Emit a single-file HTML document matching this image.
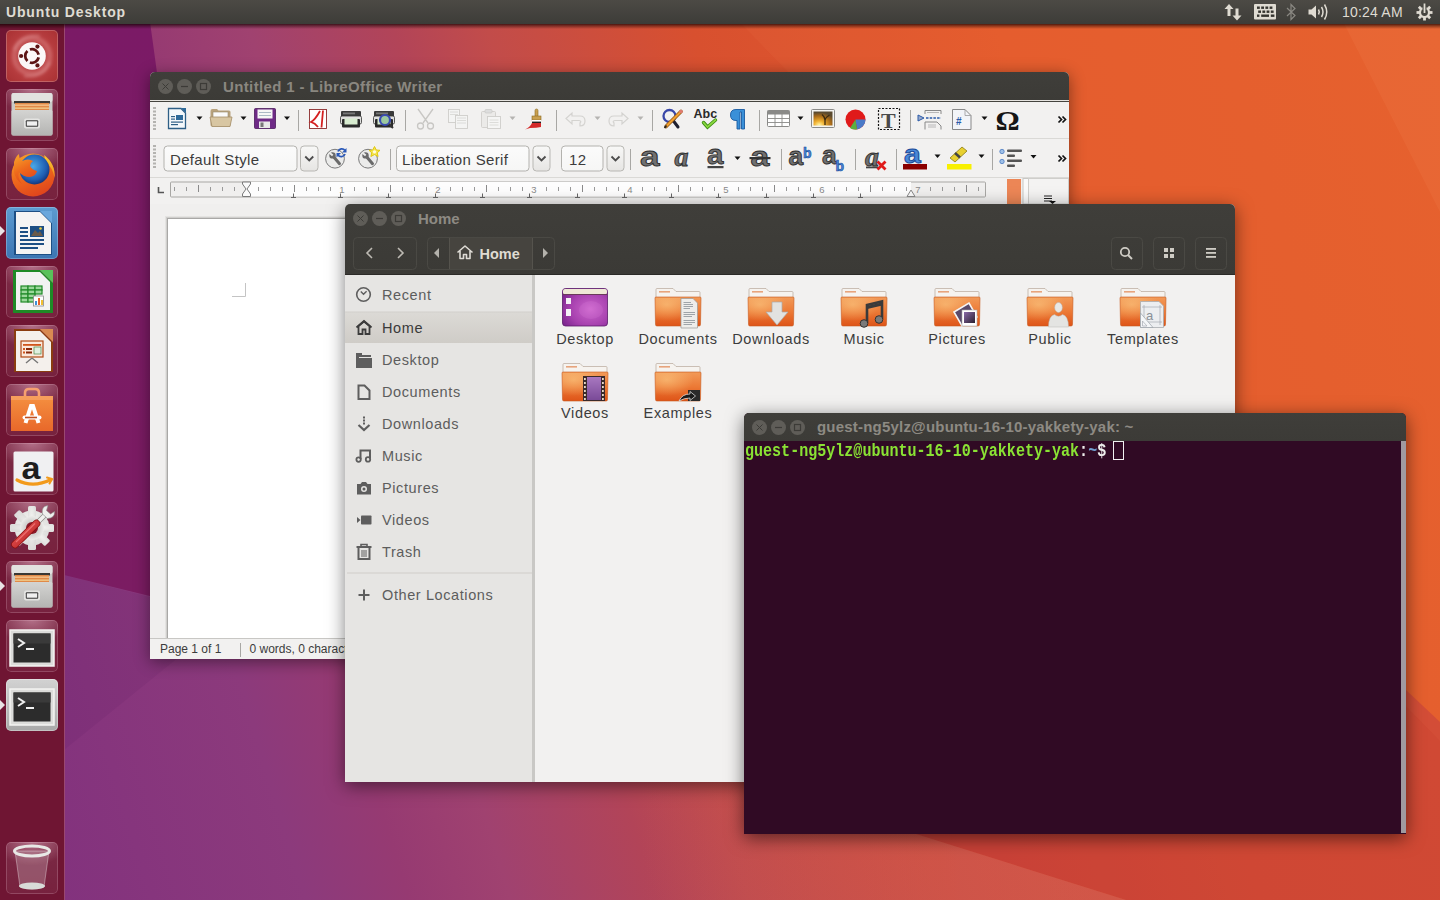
<!DOCTYPE html>
<html><head><meta charset="utf-8">
<style>
*{box-sizing:border-box;margin:0;padding:0}
html,body{width:1440px;height:900px;overflow:hidden;background:#7a1b62;font-family:"Liberation Sans",sans-serif;position:relative}
.abs{position:absolute;white-space:nowrap}
#wall{position:absolute;left:0;top:0;width:1440px;height:900px}
#panel{position:absolute;left:0;top:0;width:1440px;height:24px;background:linear-gradient(#4c4a45,#3d3c38);color:#dfdbd2;z-index:50}
#launcher{position:absolute;left:0;top:24px;width:65px;height:876px;background:#6f1533;border-right:1px solid rgba(255,190,255,.3);z-index:40}
.tile{position:absolute;left:6px;width:52px;height:52px;border-radius:5px;background:radial-gradient(ellipse 70% 45% at 50% 0%,rgba(255,210,230,.42),rgba(255,210,230,0)),linear-gradient(rgba(255,255,255,.09),rgba(255,255,255,.06));box-shadow:inset 0 0 0 1px rgba(255,220,235,.2)}
.tile svg{position:absolute;left:0;top:0}
.layer{position:absolute;left:0;top:0;width:1440px;height:900px}
.frame{position:absolute;border-radius:5px 5px 0 0;box-shadow:0 3px 16px rgba(0,0,0,.45)}
.wbtn{position:absolute;width:15px;height:15px;border-radius:50%;background:#5f5d58}
.ttl{position:absolute;font-weight:bold;font-size:15px;color:#8a8780;white-space:nowrap}
</style></head><body>

<svg id="wall" width="1440" height="900" viewBox="0 0 1440 900">
<defs>
<linearGradient id="g1" gradientUnits="userSpaceOnUse" x1="0" y1="900" x2="1562" y2="430">
<stop offset="0" stop-color="#80307e"/>
<stop offset="0.18" stop-color="#8c3a7c"/>
<stop offset="0.24" stop-color="#963a72"/>
<stop offset="0.30" stop-color="#a04270"/>
<stop offset="0.385" stop-color="#b24458"/>
<stop offset="0.44" stop-color="#c24c4a"/>
<stop offset="0.56" stop-color="#d8502f"/>
<stop offset="0.74" stop-color="#e35a2b"/>
<stop offset="1" stop-color="#e55e2b"/>
</linearGradient>
<linearGradient id="g2" gradientUnits="userSpaceOnUse" x1="760" y1="560" x2="1040" y2="900">
<stop offset="0" stop-color="#a01468" stop-opacity="0"/>
<stop offset="1" stop-color="#a01468" stop-opacity="0.2"/>
</linearGradient>
<linearGradient id="g3" gradientUnits="userSpaceOnUse" x1="0" y1="24" x2="0" y2="600">
<stop offset="0" stop-color="#7b1a66"/>
<stop offset="1" stop-color="#7b1c62"/>
</linearGradient>
<linearGradient id="g4" gradientUnits="userSpaceOnUse" x1="640" y1="0" x2="960" y2="0"><stop offset="0" stop-color="#c05a70" stop-opacity="0"/><stop offset="1" stop-color="#c05a70" stop-opacity="0.4"/></linearGradient>
</defs>
<rect width="1440" height="900" fill="url(#g1)"/>
<polygon points="1440,722 1406,690 1150,450 744,780 916,834 1126,900 1440,900" fill="#961450" fill-opacity="0.26"/>
<polygon points="718,0 1440,0 1440,741" fill="#ff9060" fill-opacity="0.07"/>
<polygon points="1332,0 1440,0 1440,212" fill="#ffa070" fill-opacity="0.1"/>
<polygon points="744,780 916,834 1126,900 640,900 640,780" fill="url(#g4)"/>
<polygon points="0,560 64,575 200,610 200,640 64,750 0,770" fill="#3a0040" fill-opacity="0.07"/>
<polygon points="0,0 147,0 158,80 215,612 64,575 0,560" fill="url(#g3)"/>
</svg>

<div id="panel">
<div class="abs" style="left:6px;top:4px;font-size:14px;font-weight:bold;letter-spacing:0.85px">Ubuntu Desktop</div>
<svg class="abs" style="left:1220px;top:0" width="220" height="24" viewBox="1220 0 220 24">
<g fill="#dfdbd2">
<path d="M1229 4 L1224.5 9 H1227.5 V16 H1230.5 V9 H1233.5 Z"/>
<path d="M1237 20.5 L1241.5 15.5 H1238.5 V8.5 H1235.5 V15.5 H1232.5 Z"/>
<rect x="1254" y="4" width="22" height="15.5" rx="1"/>
</g>
<g fill="#35342f"><rect x="1257" y="6.5" width="2.8" height="2.4"/><rect x="1261.2" y="6.5" width="2.8" height="2.4"/><rect x="1265.4" y="6.5" width="2.8" height="2.4"/><rect x="1269.6" y="6.5" width="2.8" height="2.4"/><rect x="1258.2" y="10.5" width="2.8" height="2.4"/><rect x="1262.4" y="10.5" width="2.8" height="2.4"/><rect x="1266.6" y="10.5" width="2.8" height="2.4"/><rect x="1270.8" y="10.5" width="2.8" height="2.4"/><rect x="1257" y="14.5" width="2.4" height="2.4"/><rect x="1261.2" y="14.5" width="7.8" height="2.4"/><rect x="1270.8" y="14.5" width="3.6" height="2.4"/></g>
<path d="M1287 8 L1295 15.5 L1291 19.5 V4.5 L1295 8.5 L1287 16" fill="none" stroke="#8a8882" stroke-width="1.2"/>
<path d="M1308.5 9.5 H1311.5 L1316 5.5 V18.5 L1311.5 14.5 H1308.5 Z" fill="#dfdbd2"/>
<path d="M1318.5 9.5 Q1320 12 1318.5 14.5 M1321.5 7 Q1324.5 12 1321.5 17 M1324.5 4.5 Q1329 12 1324.5 19.5" fill="none" stroke="#dfdbd2" stroke-width="1.5"/>
<g transform="translate(1424.5 12.5)"><g fill="#dfdbd2"><rect x="-1.4" y="-8" width="2.8" height="16"/><rect x="-1.4" y="-8" width="2.8" height="16" transform="rotate(45)"/><rect x="-1.4" y="-8" width="2.8" height="16" transform="rotate(90)"/><rect x="-1.4" y="-8" width="2.8" height="16" transform="rotate(135)"/></g><circle r="5.6" fill="#dfdbd2"/><circle r="3.4" fill="#45443f"/><rect x="-2" y="-9" width="4" height="6" fill="#45443f"/><rect x="-0.9" y="-9" width="1.8" height="9.5" fill="#dfdbd2"/></g>
</svg>
<div class="abs" style="left:1342px;top:4px;font-size:14px;letter-spacing:0.2px">10:24 AM</div>
</div>

<div id="pshadow" style="position:absolute;left:0;top:24px;width:1440px;height:5px;background:linear-gradient(rgba(20,0,0,.72),rgba(20,0,0,.4) 40%,rgba(20,0,0,0));z-index:49"></div>

<div id="launcher">
<div class="tile" style="top:6px;background:radial-gradient(circle at 50% 50%,#c66060 0,#b83e40 55%,#a83032 100%);box-shadow:inset 0 0 0 1px rgba(255,255,255,.22)"><svg width="52" height="52" viewBox="0 0 52 52"><defs><filter id="bl1"><feGaussianBlur stdDeviation="1.5"/></filter></defs><g filter="url(#bl1)"><circle cx="26" cy="26" r="18" fill="none" stroke="rgba(255,200,200,.22)" stroke-width="5"/><path d="M8 20 Q14 4 34 6" fill="none" stroke="rgba(255,220,220,.2)" stroke-width="3"/><path d="M44 32 Q38 48 18 46" fill="none" stroke="rgba(255,220,220,.2)" stroke-width="3"/></g><circle cx="26" cy="26" r="13.8" fill="#fbf7f7"/><path d="M32.65 27.41 A6.8 6.8 0 0 1 23.90 32.47" fill="none" stroke="#5c1414" stroke-width="2.8"/><path d="M21.45 31.05 A6.8 6.8 0 0 1 21.45 20.95" fill="none" stroke="#5c1414" stroke-width="2.8"/><path d="M23.90 19.53 A6.8 6.8 0 0 1 32.65 24.59" fill="none" stroke="#5c1414" stroke-width="2.8"/><circle cx="15.10" cy="26.00" r="2.1" fill="#5c1414"/><circle cx="31.45" cy="16.56" r="2.1" fill="#5c1414"/><circle cx="31.45" cy="35.44" r="2.1" fill="#5c1414"/></svg></div>
<div class="tile" style="top:65px">
<svg width="52" height="52" viewBox="0 0 52 52"><defs><linearGradient id="cab" x1="0" y1="0" x2="0" y2="1"><stop offset="0" stop-color="#d4d4d2"/><stop offset="1" stop-color="#b4b4b2"/></linearGradient></defs><rect x="5.5" y="4" width="41" height="42.5" rx="2" fill="#c9c9c6"/><rect x="5.5" y="4" width="41" height="9" rx="2" fill="#e2e2e0"/><rect x="8" y="12" width="36" height="2.5" fill="#3a3834"/><rect x="9" y="14" width="34" height="7" fill="#e08a48"/><rect x="9" y="15.5" width="34" height="1.3" fill="#f7c890"/><rect x="9" y="18.5" width="34" height="1.3" fill="#f2d090"/><rect x="5.5" y="21" width="41" height="25.5" rx="1.5" fill="url(#cab)"/><rect x="18" y="29.5" width="16" height="10" rx="2" fill="#e4e4e2"/><rect x="19.8" y="31.3" width="12.4" height="6.4" rx="1" fill="#3a3a3a"/><rect x="20.8" y="32.3" width="10.4" height="4.4" fill="#f0f0f0"/></svg></div>
<div class="tile" style="top:124px"><svg width="52" height="52" viewBox="0 0 52 52"><defs><radialGradient id="ffg" cx="0.45" cy="0.4" r="0.65"><stop offset="0" stop-color="#4aa8e8"/><stop offset=".7" stop-color="#1e5cb0"/><stop offset="1" stop-color="#142a6a"/></radialGradient><linearGradient id="ffo" x1="0.2" y1="0" x2="0.6" y2="1"><stop offset="0" stop-color="#f7a02a"/><stop offset="0.5" stop-color="#ee6a1c"/><stop offset="1" stop-color="#e0441c"/></linearGradient><linearGradient id="ffy" x1="0" y1="0" x2="0" y2="1"><stop offset="0" stop-color="#f8d030"/><stop offset="1" stop-color="#f08a20"/></linearGradient></defs><circle cx="27" cy="27" r="21.5" fill="url(#ffo)"/><path d="M38 7 Q50 16 48.5 30 Q47 20 40 14 Z" fill="url(#ffy)"/><circle cx="28.5" cy="21.5" r="15" fill="url(#ffg)"/><path d="M8 14 Q10 8 13 6 Q13 11 16 13 Q22 10 27 13 Q24 15 24 18 Q26 22 31 23 Q30 28 24 29 Q17 29 13 24 Q11 30 16 36 Q9 31 8 24 Z" fill="url(#ffo)"/></svg></div>
<div class="tile" style="top:183px;background:linear-gradient(#5d9bd0,#3c76b3);box-shadow:inset 0 0 0 1px rgba(255,255,255,.25)">
<svg width="52" height="52" viewBox="0 0 52 52"><path d="M8 4 H34 L46 16 V48 H8 Z" fill="#1d4f84"/><path d="M10 5 H34 L45 16 V47 H10 Z" fill="#f4f4f4"/><path d="M34 4 L46 16 V4 Z" fill="#6aa7dc"/><rect x="14" y="20" width="8" height="2" fill="#1d4f84"/><rect x="14" y="24" width="8" height="2" fill="#1d4f84"/><rect x="14" y="28" width="8" height="2" fill="#1d4f84"/><rect x="14" y="32" width="24" height="2" fill="#1d4f84"/><rect x="14" y="36" width="24" height="2" fill="#1d4f84"/><rect x="14" y="40" width="18" height="2" fill="#1d4f84"/><rect x="24" y="19" width="14" height="11" fill="#1d4f84"/><path d="M25 29 L29 23 L32 26 L34 24 L37 29 Z" fill="#6a5a4a"/><circle cx="34.5" cy="21.5" r="1.3" fill="#f0d040"/></svg></div>
<div class="tile" style="top:242px">
<svg width="52" height="52" viewBox="0 0 52 52"><path d="M7 4 H34 L47 17 V47 H7 Z" fill="#1e8a26"/><path d="M10 6 H34 L44 16 V44 H10 Z" fill="#f2f2f2"/><path d="M34 4 L47 17 V4 Z" fill="#59c25a"/><g fill="#9bd79b" stroke="#208a28" stroke-width="1.2"><rect x="15" y="20" width="7" height="4"/><rect x="22" y="20" width="7" height="4"/><rect x="29" y="20" width="7" height="4"/><rect x="15" y="24" width="7" height="4"/><rect x="22" y="24" width="7" height="4"/><rect x="29" y="24" width="7" height="4"/><rect x="15" y="28" width="7" height="4"/><rect x="22" y="28" width="7" height="4"/><rect x="15" y="32" width="7" height="4"/><rect x="22" y="32" width="7" height="4"/></g><rect x="27.5" y="30" width="10" height="10" fill="#fff" stroke="#888" stroke-width=".8"/><rect x="29" y="35" width="2" height="4" fill="#3f8fd6"/><rect x="32" y="32" width="2" height="7" fill="#e8622a"/><rect x="35" y="34" width="2" height="5" fill="#f2c031"/></svg></div>
<div class="tile" style="top:301px">
<svg width="52" height="52" viewBox="0 0 52 52"><path d="M8 4 H34 L47 17 V47 H8 Z" fill="#8a3c10"/><path d="M10 6 H34 L45 17 V46 H10 Z" fill="#f4f0ec"/><path d="M34 4 L47 17 V4 Z" fill="#d98a52"/><rect x="15" y="16" width="22" height="16" fill="#fbe9dc" stroke="#b04a14" stroke-width="1.2"/><rect x="17" y="19" width="18" height="1.8" fill="#d0561c"/><rect x="17" y="23" width="2" height="2" fill="#d0561c"/><rect x="20" y="23" width="6" height="2" fill="#8a2a0a"/><rect x="17" y="26.5" width="2" height="2" fill="#d0561c"/><rect x="20" y="26.5" width="6" height="2" fill="#8a2a0a"/><rect x="28" y="22" width="7" height="7" fill="#e0f0e0" stroke="#4a8a4a" stroke-width=".7"/><path d="M26 33 L20 38 M26 33 L32 38" stroke="#777" stroke-width="1.4"/></svg></div>
<div class="tile" style="top:360px"><svg width="52" height="52" viewBox="0 0 52 52"><defs><linearGradient id="sc" x1="0" y1="0" x2="0" y2="1"><stop offset="0" stop-color="#f59040"/><stop offset="1" stop-color="#e8682a"/></linearGradient></defs><path d="M19 14 V9 Q19 5 23 5 H29 Q33 5 33 9 V14" stroke="#f6a070" stroke-width="2.6" fill="none"/><rect x="5" y="12" width="42" height="35" fill="url(#sc)"/><path d="M5 12 H47 V16 H5 Z" fill="#f7a870" fill-opacity=".6"/><path d="M19.5 39 L25 22 H27 L32.5 39" stroke="#fff" stroke-width="4" fill="none"/><rect x="16.5" y="31.5" width="19" height="4" rx="2" fill="#fff"/><rect x="19" y="32.7" width="12" height="1.6" fill="#c05020"/></svg></div>
<div class="tile" style="top:419px"><svg width="52" height="52" viewBox="0 0 52 52"><rect x="7.5" y="8.5" width="40" height="40" rx="1.5" fill="#f0f0f2"/><text transform="translate(15.5 36) scale(1.1 1)" font-family="Liberation Sans" font-weight="bold" font-size="31" fill="#1e1e1e">a</text><path d="M11 37 Q27 45.5 45 36.5" stroke="#f29a1c" stroke-width="3.2" fill="none" stroke-linecap="round"/><path d="M41 34.5 L46 36 L43.5 40.5" stroke="#f29a1c" stroke-width="2" fill="none" stroke-linecap="round"/></svg></div>
<div class="tile" style="top:478px"><svg width="52" height="52" viewBox="0 0 52 52"><defs><radialGradient id="gearg" cx=".45" cy=".4" r=".6"><stop offset="0" stop-color="#f8f8f6"/><stop offset="1" stop-color="#dcdcda"/></radialGradient><radialGradient id="gearin" cx=".5" cy=".5" r=".5"><stop offset=".4" stop-color="#c8c8c6"/><stop offset="1" stop-color="#ececea"/></radialGradient><linearGradient id="wrr" x1="0" y1="0" x2="1" y2="1"><stop offset="0" stop-color="#f06060"/><stop offset="1" stop-color="#b01818"/></linearGradient></defs><g transform="translate(26 26)"><g fill="url(#gearg)"><circle r="17.5"/><rect x="-4" y="-22" width="8" height="44" rx="1.5"/><rect x="-4" y="-22" width="8" height="44" rx="1.5" transform="rotate(45)"/><rect x="-4" y="-22" width="8" height="44" rx="1.5" transform="rotate(90)"/><rect x="-4" y="-22" width="8" height="44" rx="1.5" transform="rotate(135)"/></g><circle r="12" fill="url(#gearin)"/><circle r="6" fill="#8a1a2a"/></g><path d="M29 23 L40 12" stroke="#8a8a88" stroke-width="5" stroke-linecap="round"/><path d="M29 23 L40 12" stroke="#f0f0ee" stroke-width="3.6" stroke-linecap="round"/><path d="M36.5 12 Q35 4 42 3.5 L40.5 8.5 L44.5 12 L48.5 9.5 Q49 16 41.5 16.5 Z" fill="#efefed" stroke="#8a8a88" stroke-width=".6"/><path d="M9 42.5 L30.5 21.5" stroke="#8a1010" stroke-width="7.5" stroke-linecap="round"/><path d="M9 42.5 L30.5 21.5" stroke="url(#wrr)" stroke-width="6" stroke-linecap="round"/><path d="M10 40 L29 21.5" stroke="#ff9090" stroke-width="1.2" stroke-opacity=".6"/></svg></div>
<div class="tile" style="top:537px">
<svg width="52" height="52" viewBox="0 0 52 52"><defs><linearGradient id="cab2" x1="0" y1="0" x2="0" y2="1"><stop offset="0" stop-color="#d4d4d2"/><stop offset="1" stop-color="#b4b4b2"/></linearGradient></defs><rect x="5.5" y="4" width="41" height="42.5" rx="2" fill="#c9c9c6"/><rect x="5.5" y="4" width="41" height="9" rx="2" fill="#e2e2e0"/><rect x="8" y="12" width="36" height="2.5" fill="#3a3834"/><rect x="9" y="14" width="34" height="7" fill="#e08a48"/><rect x="9" y="15.5" width="34" height="1.3" fill="#f7c890"/><rect x="9" y="18.5" width="34" height="1.3" fill="#f2d090"/><rect x="5.5" y="21" width="41" height="25.5" rx="1.5" fill="url(#cab2)"/><rect x="18" y="29.5" width="16" height="10" rx="2" fill="#e4e4e2"/><rect x="19.8" y="31.3" width="12.4" height="6.4" rx="1" fill="#3a3a3a"/><rect x="20.8" y="32.3" width="10.4" height="4.4" fill="#f0f0f0"/></svg></div>
<div class="tile" style="top:596px">
<svg width="52" height="52" viewBox="0 0 52 52"><rect x="4" y="10" width="44" height="36" rx="1" fill="#dcdcda"/><rect x="4" y="10" width="44" height="36" fill="none" stroke="#f4f4f2" stroke-width="1.5"/><rect x="7.5" y="13.5" width="37" height="29" fill="#2c2c2c"/><rect x="7.5" y="13.5" width="37" height="10" fill="#3a3a3a"/><path d="M12 19 L18 23 L12 27" stroke="#f0f0f0" stroke-width="2" fill="none"/><rect x="20" y="28" width="8" height="2" fill="#f0f0f0"/></svg></div>
<div class="tile" style="top:655px;background:linear-gradient(#d2d2d2,#a8a8a8);box-shadow:inset 0 0 0 1px rgba(255,255,255,.3)">
<svg width="52" height="52" viewBox="0 0 52 52"><rect x="4" y="10" width="44" height="36" rx="1" fill="#dcdcda"/><rect x="4" y="10" width="44" height="36" fill="none" stroke="#f4f4f2" stroke-width="1.5"/><rect x="7.5" y="13.5" width="37" height="29" fill="#2c2c2c"/><rect x="7.5" y="13.5" width="37" height="10" fill="#3a3a3a"/><path d="M12 19 L18 23 L12 27" stroke="#f0f0f0" stroke-width="2" fill="none"/><rect x="20" y="28" width="8" height="2" fill="#f0f0f0"/></svg></div>
<div class="tile" style="top:818px">
<svg width="52" height="52" viewBox="0 0 52 52"><path d="M9 9 L14 45 Q26 49 38 45 L43 9 Z" fill="rgba(200,170,180,.35)" stroke="rgba(255,255,255,.35)" stroke-width="1"/><ellipse cx="26" cy="9" rx="17.5" ry="5" fill="none" stroke="#e8e8e6" stroke-width="3"/><ellipse cx="26" cy="44" rx="13" ry="3.5" fill="#d8dcd8"/></svg></div>
<svg class="abs" style="left:0;top:201px" width="6" height="12"><path d="M0 1 L5 6 L0 11 Z" fill="#e8e2e4"/></svg>
<svg class="abs" style="left:0;top:556px" width="6" height="12"><path d="M0 1 L5 6 L0 11 Z" fill="#e8e2e4"/></svg>
<svg class="abs" style="left:0;top:675px" width="6" height="12"><path d="M0 1 L5 6 L0 11 Z" fill="#e8e2e4"/></svg>
</div>
<div class="layer" id="lo">
<div class="frame" style="left:150px;top:72px;width:919px;height:587px;background:#f2f1f0"></div>
<div class="abs" style="left:150px;top:72px;width:919px;height:28px;background:linear-gradient(#3f3e3a,#3c3b37);border-radius:5px 5px 0 0"></div>
<div class="abs" style="left:150px;top:100px;width:919px;height:1px;background:#e6e4e0"></div>
<div class="abs" style="left:150px;top:101px;width:919px;height:1px;background:#45443f"></div>
<div class="wbtn" style="left:158.0px;top:79px"></div>
<div class="wbtn" style="left:177.0px;top:79px"></div>
<div class="wbtn" style="left:196.0px;top:79px"></div>
<svg class="abs" style="left:150px;top:72px" width="70" height="28" viewBox="150 72 70 28"><path d="M162.5 83.5 L168.5 89.5 M168.5 83.5 L162.5 89.5" stroke="#3c3b37" stroke-width="1"/><path d="M181 86.5 H188" stroke="#3c3b37" stroke-width="1.2"/><rect x="200.5" y="83.5" width="6" height="6" fill="none" stroke="#3c3b37" stroke-width="1.2"/></svg>
<div class="ttl" style="left:223px;top:78px;letter-spacing:0.37px">Untitled 1 - LibreOffice Writer</div>
<div class="abs" style="left:150px;top:102px;width:919px;height:36px;background:#f2f1f0"></div>
<div class="abs" style="left:150px;top:138px;width:919px;height:1px;background:#dad9d6"></div>
<div class="abs" style="left:150px;top:139px;width:919px;height:38px;background:#f2f1f0"></div>
<div class="abs" style="left:150px;top:177px;width:919px;height:1px;background:#dad9d6"></div>
<svg class="abs" style="left:150px;top:102px" width="919" height="557" viewBox="150 102 919 557"><defs><linearGradient id="boxg" x1="0" y1="0" x2="0" y2="1"><stop offset="0" stop-color="#fbfbfb"/><stop offset="1" stop-color="#f6f6f5"/></linearGradient><linearGradient id="btng" x1="0" y1="0" x2="0" y2="1"><stop offset="0" stop-color="#f8f8f7"/><stop offset="1" stop-color="#e6e5e3"/></linearGradient><radialGradient id="imgg" cx=".3" cy=".95" r=".9"><stop offset="0" stop-color="#fff2a0"/><stop offset=".3" stop-color="#f0b030"/><stop offset=".7" stop-color="#a86a18"/><stop offset="1" stop-color="#5a4a30"/></radialGradient><radialGradient id="wrg" cx=".4" cy=".35" r=".7"><stop offset="0" stop-color="#fafafa"/><stop offset="1" stop-color="#b8b8b6"/></radialGradient></defs><rect x="153.0" y="107" width="3" height="2" fill="#b4b3b0"/><rect x="153.0" y="110.5" width="3" height="2" fill="#b4b3b0"/><rect x="153.0" y="114.0" width="3" height="2" fill="#b4b3b0"/><rect x="153.0" y="117.5" width="3" height="2" fill="#b4b3b0"/><rect x="153.0" y="121.0" width="3" height="2" fill="#b4b3b0"/><rect x="153.0" y="124.5" width="3" height="2" fill="#b4b3b0"/><rect x="153.0" y="128.0" width="3" height="2" fill="#b4b3b0"/><path d="M168.5 108.5 H181 L185.5 113 V128.5 H168.5 Z" fill="#f4f8fb" stroke="#2e5f86" stroke-width="1.3"/><path d="M181 108 H186 V113 Z" fill="#2e6a9a"/><rect x="171" y="116" width="4" height="1.2" fill="#2e5f86"/><rect x="171" y="118.5" width="4" height="1.2" fill="#2e5f86"/><rect x="176" y="115" width="7" height="5" fill="#2e6a9a"/><rect x="171" y="121.5" width="12" height="1.2" fill="#2e5f86"/><rect x="171" y="124" width="7" height="1.2" fill="#2e5f86"/><path d="M196.5 116.5 H202.5 L199.5 120.0 Z" fill="#111"/><path d="M210.5 111 Q210.5 109 212.5 109 H217 L218.5 110.5 H229 Q230.5 110.5 230.5 112 V125 Q230.5 126.5 229 126.5 H212.5 Q210.5 126.5 210.5 125 Z" fill="#b8a27c"/><rect x="213" y="112" width="15" height="8" fill="#fafafa" stroke="#9a8c70" stroke-width=".6"/><path d="M210 117 H232 L230 126.5 H212 Z" fill="#d8c6a2" stroke="#a48e68" stroke-width=".8"/><path d="M240.5 116.5 H246.5 L243.5 120.0 Z" fill="#111"/><rect x="254.5" y="108.5" width="21" height="20" rx="1" fill="#6e2a86" stroke="#4a1a5c" stroke-width=".8"/><rect x="257.5" y="109.5" width="15" height="9" fill="#f6f6f6"/><rect x="259" y="112" width="12" height=".8" fill="#9ab"/><rect x="259" y="115" width="12" height=".8" fill="#9ab"/><rect x="259" y="121.5" width="11" height="6.5" fill="#e8e8e8"/><rect x="260.5" y="122.5" width="3" height="4.5" fill="#777"/><path d="M284 116.5 H290 L287 120.0 Z" fill="#111"/><rect x="298.0" y="110" width="1" height="21" fill="#a8a7a4"/><rect x="309.5" y="109.5" width="17" height="19" fill="#fff" stroke="#8a2a2a" stroke-width=".9"/><path d="M320 111 Q315 120 311 122 Q315 123 318 127 M323 110.5 L321.5 127.5" stroke="#d42020" stroke-width="1.8" fill="none"/><rect x="341" y="111" width="20" height="6" rx="1" fill="#3a3a3a"/><rect x="343" y="112.5" width="12" height="1.8" fill="#777"/><rect x="340.5" y="116" width="21" height="8" rx="1.5" fill="#e0e0de" stroke="#333" stroke-width=".8"/><rect x="342" y="119" width="18" height="8.5" rx="1" fill="#2a2a2a"/><rect x="344.5" y="118.5" width="13" height="6" fill="#d8ecd0"/><rect x="374" y="111" width="20" height="6" rx="1" fill="#3a3a3a"/><rect x="376" y="112.5" width="12" height="1.8" fill="#777"/><rect x="373.5" y="116" width="21" height="8" rx="1.5" fill="#e0e0de" stroke="#333" stroke-width=".8"/><rect x="375" y="119" width="18" height="8.5" rx="1" fill="#2a2a2a"/><rect x="377.5" y="118.5" width="13" height="6" fill="#d8ecd0"/><circle cx="385" cy="120" r="5" fill="#9cc8a0" stroke="#3a4ab0" stroke-width="2.2"/><path d="M389 124 L393 128" stroke="#333" stroke-width="2"/><rect x="405.0" y="110" width="1" height="21" fill="#a8a7a4"/><g stroke="#c8c7c4" fill="none" stroke-width="1.3"><path d="M418 109 L428 123 M433 109 L423 123"/><circle cx="420.5" cy="126" r="3"/><circle cx="430.5" cy="126" r="3"/></g><g fill="#f4f4f3" stroke="#cfcecb" stroke-width=".9"><rect x="448.5" y="109.5" width="11" height="13"/><rect x="455.5" y="115.5" width="12" height="13"/></g><g stroke="#d6d5d2" stroke-width=".8"><path d="M450 112 H458 M450 114.5 H458 M457 118 H466 M457 120.5 H466 M457 123 H466"/></g><rect x="481.5" y="111.5" width="14" height="16" rx="1" fill="#ebeae8" stroke="#cfcecb" stroke-width=".9"/><rect x="485" y="109.5" width="7" height="3.5" rx="1" fill="#ddd" stroke="#c9c8c5" stroke-width=".7"/><rect x="487.5" y="116.5" width="13" height="12" fill="#f5f5f4" stroke="#cfcecb" stroke-width=".9"/><path d="M489.5 120 H498.5 M489.5 122.5 H498.5 M489.5 125 H498.5" stroke="#d6d5d2" stroke-width=".8"/><path d="M509.5 116.5 H515.5 L512.5 120.0 Z" fill="#b5b4b1"/><rect x="535" y="109" width="3" height="8" rx="1.5" fill="#c9a050" stroke="#8a6a20" stroke-width=".6"/><rect x="532" y="116" width="9" height="4" fill="#c9a050" stroke="#8a6a20" stroke-width=".6"/><rect x="532" y="120" width="9" height="1.6" fill="#fff"/><rect x="532" y="121.6" width="9" height="1.5" fill="#222"/><path d="M532 123 H541 V127 Q537 128 530 128 L525 129.5 Q530 127 532 123 Z" fill="#d42a2a"/><rect x="556.0" y="110" width="1" height="21" fill="#a8a7a4"/><path d="M566 118.5 L572 113 V116 H580 Q585 116 585 121 Q585 126 580 126 V123 Q582 121 579 120.5 H572 V124 Z" fill="none" stroke="#d4d3d0" stroke-width="1.2"/><path d="M594.5 116.5 H600.5 L597.5 120.0 Z" fill="#b5b4b1"/><path d="M628 118.5 L622 113 V116 H614 Q609 116 609 121 Q609 126 614 126 V123 Q612 121 615 120.5 H622 V124 Z" fill="none" stroke="#d4d3d0" stroke-width="1.2"/><path d="M637.5 116.5 H643.5 L640.5 120.0 Z" fill="#b5b4b1"/><rect x="652.0" y="110" width="1" height="21" fill="#a8a7a4"/><circle cx="669.5" cy="116" r="6" fill="none" stroke="#3a48a8" stroke-width="2.3"/><path d="M673.5 121 L678 127" stroke="#1e2030" stroke-width="3" stroke-linecap="round"/><path d="M666 126.5 L681 111.5" stroke="#8a5010" stroke-width="3.6" stroke-linecap="round"/><path d="M666 126.5 L681 111.5" stroke="#f0a030" stroke-width="2.2" stroke-linecap="round"/><circle cx="681" cy="111.5" r="1.8" fill="#e07a70"/><path d="M664.5 128 L666.5 125.5" stroke="#222" stroke-width="1.6"/><text x="693.5" y="117.8" font-family="Liberation Sans" font-weight="bold" font-size="12.5" fill="#2a2a2a">Abc</text><path d="M703.5 122.5 L707.5 127 L715.5 120" stroke="#3a8a10" stroke-width="3.4" fill="none" stroke-linecap="round"/><path d="M703.5 122.5 L707.5 127 L715.5 120" stroke="#8ad840" stroke-width="1.8" fill="none" stroke-linecap="round"/><path d="M744.5 109.5 H736 Q730.5 109.5 730.5 115 Q730.5 120.5 736 120.5 H737 V129 H740 V112 H741.5 V129 H744.5 Z" fill="#3a90d8" stroke="#1a5aa0" stroke-width=".9"/><rect x="759.0" y="110" width="1" height="21" fill="#a8a7a4"/><rect x="767.5" y="110.5" width="22" height="16" rx="1" fill="#fff" stroke="#8a8a88" stroke-width="1"/><rect x="767.5" y="110.5" width="22" height="4" fill="#8a8a88"/><path d="M775 110.5 V126.5 M782 110.5 V126.5 M767.5 118.5 H789.5 M767.5 122.5 H789.5" stroke="#8a8a88" stroke-width=".9"/><path d="M797.5 116.5 H803.5 L800.5 120.0 Z" fill="#111"/><rect x="811.5" y="109.5" width="23" height="18" rx="1" fill="#f4f4f2" stroke="#8a8a88" stroke-width="1"/><rect x="813.5" y="111.5" width="19" height="14" fill="url(#imgg)"/><path d="M825 125 V120 Q825 117 822 114.5 M825 120 Q826 117 829.5 115" fill="none" stroke="#3a2a10" stroke-width="1.3"/><circle cx="855.5" cy="119.5" r="10" fill="#e01a1a"/><path d="M855.5 119.5 L865.5 119.5 A10 10 0 0 1 857 129.4 Z" fill="#4a7ac8"/><path d="M855.5 119.5 L857 129.4 A10 10 0 0 1 850 128 Z" fill="#5ab040"/><rect x="878.5" y="108.5" width="21" height="21" fill="none" stroke="#111" stroke-width="1.2" stroke-dasharray="2 1.5"/><text x="881" y="127.5" font-family="Liberation Serif" font-weight="bold" font-size="22" fill="#4a4a4a">T</text><rect x="910.0" y="110" width="1" height="21" fill="#a8a7a4"/><path d="M925 110.5 H941 V114 M925 110.5 V114" fill="none" stroke="#888" stroke-width="1"/><path d="M927 112.5 H939" stroke="#aaa" stroke-width=".8"/><path d="M918 115 L924 118 L918 121 Z" fill="#9ac" stroke="#2a5aa8" stroke-width="1"/><path d="M926 118 H941" stroke="#2a5aa8" stroke-width="1.6" stroke-dasharray="2.5 1.2"/><path d="M925 129.5 V122 H937 L941 126 V129.5" fill="none" stroke="#888" stroke-width="1"/><path d="M928 125 H936 M928 127 H936" stroke="#aaa" stroke-width=".8"/><path d="M952.5 109.5 H965 L971 115.5 V129.5 H952.5 Z" fill="#f2f4f8" stroke="#888" stroke-width="1"/><path d="M965 109.5 V115.5 H971" fill="none" stroke="#999" stroke-width=".8"/><text x="956" y="125" font-family="Liberation Sans" font-weight="bold" font-size="10" fill="#2a5aa8">#</text><path d="M981.5 116.5 H987.5 L984.5 120.0 Z" fill="#111"/><text transform="translate(995.5 129.5) scale(1.12 1)" font-family="Liberation Serif" font-weight="bold" font-size="27" fill="#151515">&#937;</text><path d="M1058.5 116.5 L1061.5 119.5 L1058.5 122.5 M1062.5 116.5 L1065.5 119.5 L1062.5 122.5" fill="none" stroke="#111" stroke-width="1.7"/><rect x="153.0" y="145" width="3" height="2" fill="#b4b3b0"/><rect x="153.0" y="148.5" width="3" height="2" fill="#b4b3b0"/><rect x="153.0" y="152.0" width="3" height="2" fill="#b4b3b0"/><rect x="153.0" y="155.5" width="3" height="2" fill="#b4b3b0"/><rect x="153.0" y="159.0" width="3" height="2" fill="#b4b3b0"/><rect x="153.0" y="162.5" width="3" height="2" fill="#b4b3b0"/><rect x="153.0" y="166.0" width="3" height="2" fill="#b4b3b0"/><rect x="164.0" y="146.0" width="133.0" height="25.0" rx="3.5" fill="url(#boxg)" stroke="#b3b2ae" stroke-width="1"/><rect x="300.5" y="146" width="17.5" height="25" rx="3.5" fill="url(#btng)" stroke="#b8b7b3" stroke-width="1"/><path d="M305.25 156.5 L309.25 160.5 L313.25 156.5" fill="none" stroke="#4c4c4c" stroke-width="1.8"/><circle cx="335" cy="158.7" r="9.4" fill="#ebebea" stroke="#7a7a7a" stroke-width="1"/><path d="M334 157.2 L339.5 163.7" stroke="#6a6a6a" stroke-width="3" stroke-linecap="round"/><circle cx="332.5" cy="155.39999999999998" r="3.2" fill="#6a6a6a"/><path d="M329.5 152.7 L332.7 155.5" stroke="#ebebea" stroke-width="2"/><circle cx="368" cy="158.7" r="9.4" fill="#ebebea" stroke="#7a7a7a" stroke-width="1"/><path d="M367 157.2 L372.5 163.7" stroke="#6a6a6a" stroke-width="3" stroke-linecap="round"/><circle cx="365.5" cy="155.39999999999998" r="3.2" fill="#6a6a6a"/><path d="M362.5 152.7 L365.7 155.5" stroke="#ebebea" stroke-width="2"/><path d="M338 151.5 A4 4 0 0 1 345 150.5" fill="none" stroke="#2a58b8" stroke-width="1.8"/><path d="M346.5 148 V152.5 H342 Z" fill="#2a58b8"/><path d="M345 154 A4 4 0 0 1 338 155" fill="none" stroke="#2a58b8" stroke-width="1.8"/><path d="M336.5 157.5 V153 H341 Z" fill="#2a58b8"/><path d="M374.5 146.5 L376.3 150 L380 150.3 L377.2 152.8 L378.1 156.5 L374.5 154.5 L370.9 156.5 L371.8 152.8 L369 150.3 L372.7 150 Z" fill="#f6e650" stroke="#e0c810" stroke-width="1"/><circle cx="374.5" cy="151.8" r="1.6" fill="#fffce0"/><rect x="390.0" y="149" width="1" height="21" fill="#a8a7a4"/><rect x="396.5" y="146.0" width="132.5" height="25.0" rx="3.5" fill="url(#boxg)" stroke="#b3b2ae" stroke-width="1"/><rect x="533.0" y="146" width="17.0" height="25" rx="3.5" fill="url(#btng)" stroke="#b8b7b3" stroke-width="1"/><path d="M537.5 156.5 L541.5 160.5 L545.5 156.5" fill="none" stroke="#4c4c4c" stroke-width="1.8"/><rect x="561.5" y="146.0" width="41.5" height="25.0" rx="3.5" fill="url(#boxg)" stroke="#b3b2ae" stroke-width="1"/><rect x="607.0" y="146" width="17.0" height="25" rx="3.5" fill="url(#btng)" stroke="#b8b7b3" stroke-width="1"/><path d="M611.5 156.5 L615.5 160.5 L619.5 156.5" fill="none" stroke="#4c4c4c" stroke-width="1.8"/><rect x="630.0" y="149" width="1" height="21" fill="#a8a7a4"/><text transform="translate(640 165.5) scale(1.25 1)" font-family="Liberation Sans" font-weight="bold"  font-size="28" fill="#707070" stroke="#2e2e2e" stroke-width=".9">a</text><text transform="translate(674.5 165.5) scale(1.0 1)" font-family="Liberation Serif" font-weight="bold" font-style="italic" font-size="28" fill="#707070" stroke="#2e2e2e" stroke-width=".9">a</text><text transform="translate(707 164) scale(1.05 1)" font-family="Liberation Sans" font-weight="bold"  font-size="28" fill="#707070" stroke="#2e2e2e" stroke-width=".9">a</text><rect x="707.5" y="166" width="16" height="2.2" fill="#444"/><path d="M734.5 156.5 H740.5 L737.5 160.0 Z" fill="#111"/><text transform="translate(750.5 165.5) scale(1.2 1)" font-family="Liberation Sans" font-weight="bold"  font-size="28" fill="#707070" stroke="#2e2e2e" stroke-width=".9">a</text><rect x="749.5" y="157" width="21" height="2.2" fill="#333"/><rect x="781.0" y="149" width="1" height="21" fill="#a8a7a4"/><text transform="translate(788.5 165) scale(1.05 1)" font-family="Liberation Sans" font-weight="bold"  font-size="25" fill="#707070" stroke="#2e2e2e" stroke-width=".9">a</text><text x="803" y="158" font-family="Liberation Sans" font-weight="bold" font-size="14" fill="#4a88d8" stroke="#1a4a98" stroke-width=".6">b</text><text transform="translate(822 164) scale(1.05 1)" font-family="Liberation Sans" font-weight="bold"  font-size="25" fill="#707070" stroke="#2e2e2e" stroke-width=".9">a</text><text x="835.5" y="171" font-family="Liberation Sans" font-weight="bold" font-size="14" fill="#4a88d8" stroke="#1a4a98" stroke-width=".6">b</text><rect x="855.0" y="149" width="1" height="21" fill="#a8a7a4"/><text transform="translate(865 165.5) scale(1.0 1)" font-family="Liberation Serif" font-weight="bold" font-style="italic" font-size="28" fill="#707070" stroke="#2e2e2e" stroke-width=".9">a</text><rect x="866" y="166.5" width="12" height="1.8" fill="#444"/><path d="M877.5 161.5 L885.5 169.5 M885.5 161.5 L877.5 169.5" stroke="#e01a1a" stroke-width="2.8"/><rect x="896.0" y="149" width="1" height="21" fill="#a8a7a4"/><text transform="translate(904 162.5) scale(1.2 1)" font-family="Liberation Sans" font-weight="bold" font-size="25" fill="#4a88d8" stroke="#1a4a98" stroke-width=".9">a</text><rect x="903" y="164" width="24" height="5.5" fill="#8a0000"/><path d="M934.5 154.5 H940.5 L937.5 158.0 Z" fill="#111"/><path d="M950 158 L962 147 L967 151 L955 162 Z" fill="#e8d030" stroke="#8a7a10" stroke-width=".8"/><path d="M955 153 L960 157.5" stroke="#444" stroke-width="2.5"/><rect x="947" y="164" width="24.5" height="5.5" fill="#f8f000"/><path d="M978.5 154.5 H984.5 L981.5 158.0 Z" fill="#111"/><rect x="992.0" y="149" width="1" height="21" fill="#a8a7a4"/><circle cx="1002" cy="151.5" r="2.2" fill="#9ec0e8" stroke="#4a7ac0" stroke-width=".8"/><circle cx="1002" cy="161.5" r="2.2" fill="#9ec0e8" stroke="#4a7ac0" stroke-width=".8"/><g fill="#555"><rect x="1007" y="149.5" width="15" height="2.4" rx="1"/><rect x="1007" y="154.5" width="8" height="2.4" rx="1"/><rect x="1007" y="159.5" width="15" height="2.4" rx="1"/><rect x="1007" y="164.5" width="8" height="2.4" rx="1"/></g><path d="M1030.5 155 H1036.5 L1033.5 158.5 Z" fill="#111"/><path d="M1058.5 155.5 L1061.5 158.5 L1058.5 161.5 M1062.5 155.5 L1065.5 158.5 L1062.5 161.5" fill="none" stroke="#111" stroke-width="1.7"/><rect x="150" y="178" width="919" height="26" fill="#f2f1f0"/><path d="M158.5 187 V192.5 H164" fill="none" stroke="#555" stroke-width="1.6"/><rect x="170.5" y="182" width="815" height="15" rx="1" fill="#f0efee" stroke="#a8a7a4" stroke-width="1"/><rect x="246" y="182" width="665" height="14.5" fill="#fdfdfd"/><rect x="174" y="187" width="1" height="4" fill="#9a9a9a"/><rect x="186" y="187" width="1" height="4" fill="#9a9a9a"/><rect x="198" y="185" width="1" height="7" fill="#8a8a8a"/><rect x="210" y="187" width="1" height="4" fill="#9a9a9a"/><rect x="222" y="187" width="1" height="4" fill="#9a9a9a"/><rect x="234" y="187" width="1" height="4" fill="#9a9a9a"/><rect x="258" y="187" width="1" height="4" fill="#9a9a9a"/><rect x="270" y="187" width="1" height="4" fill="#9a9a9a"/><rect x="282" y="187" width="1" height="4" fill="#9a9a9a"/><rect x="294" y="185" width="1" height="7" fill="#8a8a8a"/><rect x="306" y="187" width="1" height="4" fill="#9a9a9a"/><rect x="318" y="187" width="1" height="4" fill="#9a9a9a"/><rect x="330" y="187" width="1" height="4" fill="#9a9a9a"/><text x="342" y="193" text-anchor="middle" font-family="Liberation Sans" font-size="9.5" fill="#8a8a8a">1</text><rect x="354" y="187" width="1" height="4" fill="#9a9a9a"/><rect x="366" y="187" width="1" height="4" fill="#9a9a9a"/><rect x="378" y="187" width="1" height="4" fill="#9a9a9a"/><rect x="390" y="185" width="1" height="7" fill="#8a8a8a"/><rect x="402" y="187" width="1" height="4" fill="#9a9a9a"/><rect x="414" y="187" width="1" height="4" fill="#9a9a9a"/><rect x="426" y="187" width="1" height="4" fill="#9a9a9a"/><text x="438" y="193" text-anchor="middle" font-family="Liberation Sans" font-size="9.5" fill="#8a8a8a">2</text><rect x="450" y="187" width="1" height="4" fill="#9a9a9a"/><rect x="462" y="187" width="1" height="4" fill="#9a9a9a"/><rect x="474" y="187" width="1" height="4" fill="#9a9a9a"/><rect x="486" y="185" width="1" height="7" fill="#8a8a8a"/><rect x="498" y="187" width="1" height="4" fill="#9a9a9a"/><rect x="510" y="187" width="1" height="4" fill="#9a9a9a"/><rect x="522" y="187" width="1" height="4" fill="#9a9a9a"/><text x="534" y="193" text-anchor="middle" font-family="Liberation Sans" font-size="9.5" fill="#8a8a8a">3</text><rect x="546" y="187" width="1" height="4" fill="#9a9a9a"/><rect x="558" y="187" width="1" height="4" fill="#9a9a9a"/><rect x="570" y="187" width="1" height="4" fill="#9a9a9a"/><rect x="582" y="185" width="1" height="7" fill="#8a8a8a"/><rect x="594" y="187" width="1" height="4" fill="#9a9a9a"/><rect x="606" y="187" width="1" height="4" fill="#9a9a9a"/><rect x="618" y="187" width="1" height="4" fill="#9a9a9a"/><text x="630" y="193" text-anchor="middle" font-family="Liberation Sans" font-size="9.5" fill="#8a8a8a">4</text><rect x="642" y="187" width="1" height="4" fill="#9a9a9a"/><rect x="654" y="187" width="1" height="4" fill="#9a9a9a"/><rect x="666" y="187" width="1" height="4" fill="#9a9a9a"/><rect x="678" y="185" width="1" height="7" fill="#8a8a8a"/><rect x="690" y="187" width="1" height="4" fill="#9a9a9a"/><rect x="702" y="187" width="1" height="4" fill="#9a9a9a"/><rect x="714" y="187" width="1" height="4" fill="#9a9a9a"/><text x="726" y="193" text-anchor="middle" font-family="Liberation Sans" font-size="9.5" fill="#8a8a8a">5</text><rect x="738" y="187" width="1" height="4" fill="#9a9a9a"/><rect x="750" y="187" width="1" height="4" fill="#9a9a9a"/><rect x="762" y="187" width="1" height="4" fill="#9a9a9a"/><rect x="774" y="185" width="1" height="7" fill="#8a8a8a"/><rect x="786" y="187" width="1" height="4" fill="#9a9a9a"/><rect x="798" y="187" width="1" height="4" fill="#9a9a9a"/><rect x="810" y="187" width="1" height="4" fill="#9a9a9a"/><text x="822" y="193" text-anchor="middle" font-family="Liberation Sans" font-size="9.5" fill="#8a8a8a">6</text><rect x="834" y="187" width="1" height="4" fill="#9a9a9a"/><rect x="846" y="187" width="1" height="4" fill="#9a9a9a"/><rect x="858" y="187" width="1" height="4" fill="#9a9a9a"/><rect x="870" y="185" width="1" height="7" fill="#8a8a8a"/><rect x="882" y="187" width="1" height="4" fill="#9a9a9a"/><rect x="894" y="187" width="1" height="4" fill="#9a9a9a"/><rect x="906" y="187" width="1" height="4" fill="#9a9a9a"/><text x="918" y="193" text-anchor="middle" font-family="Liberation Sans" font-size="9.5" fill="#8a8a8a">7</text><rect x="930" y="187" width="1" height="4" fill="#9a9a9a"/><rect x="942" y="187" width="1" height="4" fill="#9a9a9a"/><rect x="954" y="187" width="1" height="4" fill="#9a9a9a"/><rect x="966" y="185" width="1" height="7" fill="#8a8a8a"/><rect x="978" y="187" width="1" height="4" fill="#9a9a9a"/><rect x="293" y="193.5" width="1" height="4" fill="#666"/><rect x="291" y="197" width="5" height="1" fill="#666"/><rect x="340" y="193.5" width="1" height="4" fill="#666"/><rect x="338" y="197" width="5" height="1" fill="#666"/><rect x="388" y="193.5" width="1" height="4" fill="#666"/><rect x="386" y="197" width="5" height="1" fill="#666"/><rect x="435" y="193.5" width="1" height="4" fill="#666"/><rect x="433" y="197" width="5" height="1" fill="#666"/><rect x="482" y="193.5" width="1" height="4" fill="#666"/><rect x="480" y="197" width="5" height="1" fill="#666"/><rect x="529" y="193.5" width="1" height="4" fill="#666"/><rect x="527" y="197" width="5" height="1" fill="#666"/><rect x="577" y="193.5" width="1" height="4" fill="#666"/><rect x="575" y="197" width="5" height="1" fill="#666"/><rect x="624" y="193.5" width="1" height="4" fill="#666"/><rect x="622" y="197" width="5" height="1" fill="#666"/><rect x="671" y="193.5" width="1" height="4" fill="#666"/><rect x="669" y="197" width="5" height="1" fill="#666"/><rect x="718" y="193.5" width="1" height="4" fill="#666"/><rect x="716" y="197" width="5" height="1" fill="#666"/><rect x="766" y="193.5" width="1" height="4" fill="#666"/><rect x="764" y="197" width="5" height="1" fill="#666"/><rect x="813" y="193.5" width="1" height="4" fill="#666"/><rect x="811" y="197" width="5" height="1" fill="#666"/><rect x="860" y="193.5" width="1" height="4" fill="#666"/><rect x="858" y="197" width="5" height="1" fill="#666"/><path d="M242.5 182 H250.5 V184 L247 189 L250.5 194 V196.5 H242.5 V194 L246 189 L242.5 184 Z" fill="#fafafa" stroke="#7a7a7a" stroke-width="1"/><path d="M907 196.5 H915 L911 190 Z" fill="#fafafa" stroke="#888" stroke-width="1"/><rect x="1007" y="179" width="14" height="25" fill="#ec8656"/><rect x="1023" y="178.5" width="6" height="25.5" fill="#fafafa" stroke="#c8c7c4" stroke-width="1"/><rect x="1028.5" y="178.5" width="40" height="25.5" fill="#f4f3f2" stroke="#cfcecb" stroke-width="1"/><path d="M1044 196 H1052 M1044 198.5 H1052 M1044 201 H1052" stroke="#222" stroke-width="1.2"/><path d="M1049 201 H1056 L1052.5 204 Z" fill="#111"/><rect x="150" y="204" width="919" height="434" fill="#f0efee"/><rect x="165" y="216" width="200" height="424" fill="#e4e3e1"/><rect x="166" y="217" width="200" height="424" fill="#cfcecc"/><rect x="167" y="218" width="200" height="424" fill="#a9a8a6"/><rect x="168" y="219" width="200" height="421" fill="#fff"/><path d="M232 296.5 H245.5 V283" fill="none" stroke="#c4c4c4" stroke-width="1"/><rect x="150" y="638" width="919" height="21" fill="#f2f1f0"/><rect x="150" y="638" width="919" height="1" fill="#c8c7c4"/><rect x="240" y="643" width="1" height="14" fill="#a8a7a4"/></svg>
<div class="abs" style="left:170px;top:150.5px;font-size:15px;letter-spacing:0.33px;color:#3c3c3c">Default Style</div>
<div class="abs" style="left:402px;top:150.5px;font-size:15px;letter-spacing:0.33px;color:#3c3c3c">Liberation Serif</div>
<div class="abs" style="left:569px;top:150.5px;font-size:15px;letter-spacing:0.33px;color:#3c3c3c">12</div>
<div class="abs" style="left:160px;top:642px;font-size:12px;color:#3c3c3c">Page 1 of 1</div>
<div class="abs" style="left:249.5px;top:642px;font-size:12px;color:#3c3c3c">0 words, 0 characters</div>
</div>
<div class="layer" id="files">
<div class="frame" style="left:345px;top:204px;width:890px;height:578px;background:#f2f1f0;box-shadow:0 4px 18px rgba(0,0,0,.5)"></div>
<div class="abs" style="left:345px;top:204px;width:890px;height:71px;background:linear-gradient(#3f3e3a,#3b3a36);border-radius:5px 5px 0 0;border-bottom:1px solid #2b2a27"></div>
<div class="wbtn" style="left:353.0px;top:211px"></div>
<div class="wbtn" style="left:372.0px;top:211px"></div>
<div class="wbtn" style="left:391.0px;top:211px"></div>
<svg class="abs" style="left:345px;top:204px" width="890" height="578" viewBox="345 204 890 578"><defs><linearGradient id="selg" x1="0" y1="0" x2="0" y2="1"><stop offset="0" stop-color="#dcdad6"/><stop offset="1" stop-color="#cfccc7"/></linearGradient><linearGradient id="fold" x1="0" y1="0" x2="0" y2="1"><stop offset="0" stop-color="#f29a58"/><stop offset=".5" stop-color="#ec7a36"/><stop offset="1" stop-color="#de5418"/></linearGradient><radialGradient id="foldhl" cx=".25" cy=".25" r=".6"><stop offset="0" stop-color="#ffd890" stop-opacity=".5"/><stop offset="1" stop-color="#ffd890" stop-opacity="0"/></radialGradient><radialGradient id="desk" cx=".62" cy=".55" r=".75"><stop offset="0" stop-color="#cc66cc"/><stop offset=".6" stop-color="#a640ae"/><stop offset="1" stop-color="#76228a"/></radialGradient><linearGradient id="photo" x1="0" y1="0" x2="1" y2="1"><stop offset="0" stop-color="#8a6aa8"/><stop offset="1" stop-color="#2a2030"/></linearGradient><linearGradient id="vid" x1="0" y1="0" x2="0" y2="1"><stop offset="0" stop-color="#a878c0"/><stop offset="1" stop-color="#7a4a98"/></linearGradient></defs><path d="M357.5 215.5 L363.5 221.5 M363.5 215.5 L357.5 221.5" stroke="#3c3b37" stroke-width="1"/><path d="M376 218.5 H383" stroke="#3c3b37" stroke-width="1.2"/><rect x="395.5" y="215.5" width="6" height="6" fill="none" stroke="#3c3b37" stroke-width="1.2"/><rect x="353.5" y="237.5" width="63" height="32" rx="4" fill="none" stroke="#4a4944" stroke-width="1"/><path d="M372 248 L367 253 L372 258" fill="none" stroke="#bdbab3" stroke-width="1.6"/><path d="M398 248 L403 253 L398 258" fill="none" stroke="#bdbab3" stroke-width="1.6"/><rect x="427.5" y="237.5" width="127" height="32" rx="4" fill="none" stroke="#4a4944" stroke-width="1"/><rect x="449.5" y="238" width="83" height="31" fill="#46443f"/><path d="M449.5 238 V269 M532.5 238 V269" stroke="#55534d" stroke-width="1"/><path d="M439 248 L434 253 L439 258 Z" fill="#b4b2ac"/><path d="M543 248 L548 253 L543 258 Z" fill="#b4b2ac"/><path d="M457.5 252.5 L465 246 L472.5 252.5 M460 251 V258.5 H463.5 V254.5 H466.5 V258.5 H470 V251" fill="none" stroke="#dedbd5" stroke-width="1.6" stroke-linejoin="round"/><rect x="1111.5" y="237.5" width="31" height="32" rx="4" fill="none" stroke="#4a4944" stroke-width="1"/><rect x="1153.5" y="237.5" width="31" height="32" rx="4" fill="none" stroke="#4a4944" stroke-width="1"/><rect x="1195.5" y="237.5" width="31" height="32" rx="4" fill="none" stroke="#4a4944" stroke-width="1"/><circle cx="1125" cy="252" r="4.2" fill="none" stroke="#cfccc5" stroke-width="1.8"/><path d="M1128 255 L1132 259" stroke="#cfccc5" stroke-width="2"/><g fill="#cfccc5"><rect x="1164" y="248" width="4" height="4"/><rect x="1170" y="248" width="4" height="4"/><rect x="1164" y="254" width="4" height="4"/><rect x="1170" y="254" width="4" height="4"/></g><g fill="#cfccc5"><rect x="1206" y="248" width="10" height="1.8"/><rect x="1206" y="252" width="10" height="1.8"/><rect x="1206" y="256" width="10" height="1.8"/></g><rect x="345" y="275" width="187" height="507" fill="#e6e5e3"/><rect x="532" y="275" width="3" height="507" fill="#c9c8c5"/><rect x="345" y="312" width="187" height="31" fill="url(#selg)"/><rect x="345" y="311.5" width="187" height="1" fill="#d2d0cc"/><rect x="347" y="572.5" width="185" height="1" fill="#cfceca"/><circle cx="363.5" cy="294.5" r="6.8" fill="none" stroke="#5e5e5e" stroke-width="1.6"/><path d="M360.8 291.6 L363.5 294.3 L366.6 291.2" fill="none" stroke="#5e5e5e" stroke-width="1.4"/><path d="M356.5 327.5 L364 321 L371.5 327.5" fill="none" stroke="#3c3c3c" stroke-width="2"/><path d="M358.5 326 L364 321.5 L369.5 326 V334 H365.5 V329.5 H362.5 V334 H358.5 Z" fill="none" stroke="#3c3c3c" stroke-width="1.8"/><path d="M356 353 H362 V355 H371 V357 H359 V368 H356 Z" fill="#5e5e5e"/><rect x="359" y="358" width="13" height="10" fill="#5e5e5e"/><path d="M358.5 385.5 H364.5 L369.5 390.5 V399 H358.5 Z" fill="none" stroke="#5e5e5e" stroke-width="2"/><rect x="363" y="416.5" width="2" height="2" fill="#5e5e5e"/><rect x="363" y="419.5" width="2" height="2" fill="#5e5e5e"/><rect x="363" y="422.5" width="2" height="2" fill="#5e5e5e"/><path d="M358.5 425 L364 430 L369.5 425" fill="none" stroke="#5e5e5e" stroke-width="2.2"/><path d="M360.5 459 V450.5 H370 V458.5" fill="none" stroke="#5e5e5e" stroke-width="2"/><circle cx="358.6" cy="459.6" r="2.2" fill="none" stroke="#5e5e5e" stroke-width="1.8"/><circle cx="368" cy="459.4" r="2.2" fill="none" stroke="#5e5e5e" stroke-width="1.8"/><path d="M357 484 H360.5 L362 482 H366 L367.5 484 H371 V494.5 H357 Z" fill="#5e5e5e"/><circle cx="364" cy="489" r="3" fill="#e6e5e3"/><circle cx="364" cy="489" r="1.5" fill="#5e5e5e"/><path d="M357 517 L360.5 520 L357 523 Z" fill="#5e5e5e"/><rect x="361" y="515.5" width="10.5" height="9" rx=".8" fill="#5e5e5e"/><path d="M356.5 547 H371.5" stroke="#5e5e5e" stroke-width="2"/><path d="M361 547 V544.5 H367 V547" fill="none" stroke="#5e5e5e" stroke-width="1.6"/><path d="M358.5 548 V559 H369.5 V548" fill="none" stroke="#5e5e5e" stroke-width="2"/><path d="M362 550 V557 M364 550 V557 M366 550 V557" stroke="#5e5e5e" stroke-width="1"/><path d="M358.5 595 H369.5 M364 589.5 V600.5" stroke="#5e5e5e" stroke-width="2"/><g transform="translate(562 288)"><rect x="0.5" y="0.5" width="45" height="37.5" rx="3" fill="url(#desk)" stroke="#5a1a6a" stroke-width=".8"/><rect x="1" y="1" width="44" height="5.5" rx="2" fill="#efe8d6"/><rect x="1" y="6" width="44" height="1" fill="#6a3a5a"/><ellipse cx="29" cy="22" rx="12" ry="9" fill="rgba(255,180,255,.1)"/><rect x="4" y="10" width="5" height="6" fill="#f4f0f6"/><rect x="4" y="21" width="5" height="7" fill="#f4f0f6"/></g><g transform="translate(655 288)"><path d="M1 1.5 Q1 0.5 2 0.5 H18 L21 3.5 H44 Q45 3.5 45 4.5 V12 H1 Z" fill="#f6f3ef" stroke="#b8a89a" stroke-width=".7"/><rect x="4" y="3" width="11" height="1.6" fill="#e7a47c"/><path d="M0 10 Q0 9 1 9 H45 Q46 9 46 10 L45.5 36.5 Q45.5 38 44 38 H2 Q0.5 38 0.5 36.5 Z" fill="url(#fold)" stroke="#c65a20" stroke-width=".6"/><path d="M0.5 10 H45.5 L45.3 37 H0.8 Z" fill="url(#foldhl)"/><path d="M26 10.5 H38 L42.5 15 V40 H26 Z" fill="#eeedeb" stroke="#9a9a98" stroke-width=".7"/><path d="M28.5 14.5 H36 M28.5 16.5 H38 M28.5 18.5 H38 M28.5 20.5 H35 M28.5 24.5 H40 M28.5 26.5 H40 M28.5 28.5 H37 M28.5 32.5 H40 M28.5 34.5 H40 M28.5 36.5 H37" stroke="#8a9098" stroke-width="0.8"/></g><g transform="translate(748 288)"><path d="M1 1.5 Q1 0.5 2 0.5 H18 L21 3.5 H44 Q45 3.5 45 4.5 V12 H1 Z" fill="#f6f3ef" stroke="#b8a89a" stroke-width=".7"/><rect x="4" y="3" width="11" height="1.6" fill="#e7a47c"/><path d="M0 10 Q0 9 1 9 H45 Q46 9 46 10 L45.5 36.5 Q45.5 38 44 38 H2 Q0.5 38 0.5 36.5 Z" fill="url(#fold)" stroke="#c65a20" stroke-width=".6"/><path d="M0.5 10 H45.5 L45.3 37 H0.8 Z" fill="url(#foldhl)"/><path d="M24 14 H34 V24 H40 L29 37 L18 24 H24 Z" fill="#e2e2e0" stroke="#aaa" stroke-width=".7"/></g><g transform="translate(841 288)"><path d="M1 1.5 Q1 0.5 2 0.5 H18 L21 3.5 H44 Q45 3.5 45 4.5 V12 H1 Z" fill="#f6f3ef" stroke="#b8a89a" stroke-width=".7"/><rect x="4" y="3" width="11" height="1.6" fill="#e7a47c"/><path d="M0 10 Q0 9 1 9 H45 Q46 9 46 10 L45.5 36.5 Q45.5 38 44 38 H2 Q0.5 38 0.5 36.5 Z" fill="url(#fold)" stroke="#c65a20" stroke-width=".6"/><path d="M0.5 10 H45.5 L45.3 37 H0.8 Z" fill="url(#foldhl)"/><path d="M26 35 V17 L41 13.5 V31" fill="none" stroke="#3a3a3a" stroke-width="2.6"/><path d="M26 19.5 L41 16" stroke="#3a3a3a" stroke-width="3.2"/><circle cx="23" cy="35.5" r="3.8" fill="#7a7a7a" stroke="#333" stroke-width="1"/><circle cx="38" cy="31.5" r="3.8" fill="#7a7a7a" stroke="#333" stroke-width="1"/></g><g transform="translate(934 288)"><path d="M1 1.5 Q1 0.5 2 0.5 H18 L21 3.5 H44 Q45 3.5 45 4.5 V12 H1 Z" fill="#f6f3ef" stroke="#b8a89a" stroke-width=".7"/><rect x="4" y="3" width="11" height="1.6" fill="#e7a47c"/><path d="M0 10 Q0 9 1 9 H45 Q46 9 46 10 L45.5 36.5 Q45.5 38 44 38 H2 Q0.5 38 0.5 36.5 Z" fill="url(#fold)" stroke="#c65a20" stroke-width=".6"/><path d="M0.5 10 H45.5 L45.3 37 H0.8 Z" fill="url(#foldhl)"/><path d="M20 24 L35 15 L43 29 L28 38 Z" fill="#5a4a6a" stroke="#f4f4f4" stroke-width="1.6"/><rect x="28" y="22" width="15" height="16" fill="#fff" stroke="#aaa" stroke-width=".6"/><rect x="30" y="24" width="11" height="11" fill="url(#photo)"/></g><g transform="translate(1027 288)"><path d="M1 1.5 Q1 0.5 2 0.5 H18 L21 3.5 H44 Q45 3.5 45 4.5 V12 H1 Z" fill="#f6f3ef" stroke="#b8a89a" stroke-width=".7"/><rect x="4" y="3" width="11" height="1.6" fill="#e7a47c"/><path d="M0 10 Q0 9 1 9 H45 Q46 9 46 10 L45.5 36.5 Q45.5 38 44 38 H2 Q0.5 38 0.5 36.5 Z" fill="url(#fold)" stroke="#c65a20" stroke-width=".6"/><path d="M0.5 10 H45.5 L45.3 37 H0.8 Z" fill="url(#foldhl)"/><ellipse cx="31.5" cy="19.5" rx="3.8" ry="5" fill="#e8e8e6" stroke="#b8b8b6" stroke-width=".5"/><path d="M21.5 39 Q21.5 28 27.5 26.5 Q31.5 30 35.5 26.5 Q41.5 28 41.5 39 Z" fill="#e4e4e2" stroke="#b8b8b6" stroke-width=".5"/></g><g transform="translate(1120 288)"><path d="M1 1.5 Q1 0.5 2 0.5 H18 L21 3.5 H44 Q45 3.5 45 4.5 V12 H1 Z" fill="#f6f3ef" stroke="#b8a89a" stroke-width=".7"/><rect x="4" y="3" width="11" height="1.6" fill="#e7a47c"/><path d="M0 10 Q0 9 1 9 H45 Q46 9 46 10 L45.5 36.5 Q45.5 38 44 38 H2 Q0.5 38 0.5 36.5 Z" fill="url(#fold)" stroke="#c65a20" stroke-width=".6"/><path d="M0.5 10 H45.5 L45.3 37 H0.8 Z" fill="url(#foldhl)"/><path d="M20.5 13.5 H39 L43.5 18 V39.5 H20.5 Z" fill="#eceef0" stroke="#a8acb0" stroke-width=".8"/><path d="M24 17 V37 M40 17 V37 M22 19 H42 M22 34 H42" stroke="#9aa0a8" stroke-width=".6"/><text x="26" y="32" font-family="Liberation Sans" font-size="13" fill="#8a9098">a</text><path d="M20.5 25 L33 39.5 H20.5 Z" fill="#f4f6f8" stroke="#9aa0a8" stroke-width=".7"/><path d="M22.5 33 L27 38 H22.5 Z" fill="none" stroke="#9aa0a8" stroke-width=".6"/></g><g transform="translate(562 363)"><path d="M1 1.5 Q1 0.5 2 0.5 H18 L21 3.5 H44 Q45 3.5 45 4.5 V12 H1 Z" fill="#f6f3ef" stroke="#b8a89a" stroke-width=".7"/><rect x="4" y="3" width="11" height="1.6" fill="#e7a47c"/><path d="M0 10 Q0 9 1 9 H45 Q46 9 46 10 L45.5 36.5 Q45.5 38 44 38 H2 Q0.5 38 0.5 36.5 Z" fill="url(#fold)" stroke="#c65a20" stroke-width=".6"/><path d="M0.5 10 H45.5 L45.3 37 H0.8 Z" fill="url(#foldhl)"/><rect x="21" y="13" width="22" height="25" fill="#3a2a2a"/><rect x="25" y="14" width="14" height="23" fill="url(#vid)"/><g fill="#e8d8c8"><rect x="22" y="15" width="1.8" height="2"/><rect x="22" y="19" width="1.8" height="2"/><rect x="22" y="23" width="1.8" height="2"/><rect x="22" y="27" width="1.8" height="2"/><rect x="22" y="31" width="1.8" height="2"/><rect x="22" y="35" width="1.8" height="2"/><rect x="40" y="15" width="1.8" height="2"/><rect x="40" y="19" width="1.8" height="2"/><rect x="40" y="23" width="1.8" height="2"/><rect x="40" y="27" width="1.8" height="2"/><rect x="40" y="31" width="1.8" height="2"/><rect x="40" y="35" width="1.8" height="2"/></g></g><g transform="translate(655 363)"><path d="M1 1.5 Q1 0.5 2 0.5 H18 L21 3.5 H44 Q45 3.5 45 4.5 V12 H1 Z" fill="#f6f3ef" stroke="#b8a89a" stroke-width=".7"/><rect x="4" y="3" width="11" height="1.6" fill="#e7a47c"/><path d="M0 10 Q0 9 1 9 H45 Q46 9 46 10 L45.5 36.5 Q45.5 38 44 38 H2 Q0.5 38 0.5 36.5 Z" fill="url(#fold)" stroke="#c65a20" stroke-width=".6"/><path d="M0.5 10 H45.5 L45.3 37 H0.8 Z" fill="url(#foldhl)"/><rect x="33" y="27" width="12" height="11" fill="#2a2a2a"/><path d="M24 38 Q27 31 35 31 V28.5 L40.5 33 L35 37.5 V35 Q29 35 24 38 Z" fill="#1a1a1a" stroke="#f0f0f0" stroke-width=".7"/></g></svg>
<div class="ttl" style="left:418px;top:210px;color:#8d8a83">Home</div>
<div class="abs" style="left:479.5px;top:246px;font-size:14.5px;font-weight:bold;color:#dfdbd2">Home</div>
<div class="abs" style="left:382px;top:287.0px;font-size:14.5px;letter-spacing:0.6px;color:#5d5d5d">Recent</div>
<div class="abs" style="left:382px;top:319.5px;font-size:14.5px;letter-spacing:0.6px;color:#3a3a3a">Home</div>
<div class="abs" style="left:382px;top:351.5px;font-size:14.5px;letter-spacing:0.6px;color:#5d5d5d">Desktop</div>
<div class="abs" style="left:382px;top:383.5px;font-size:14.5px;letter-spacing:0.6px;color:#5d5d5d">Documents</div>
<div class="abs" style="left:382px;top:415.5px;font-size:14.5px;letter-spacing:0.6px;color:#5d5d5d">Downloads</div>
<div class="abs" style="left:382px;top:447.5px;font-size:14.5px;letter-spacing:0.6px;color:#5d5d5d">Music</div>
<div class="abs" style="left:382px;top:479.5px;font-size:14.5px;letter-spacing:0.6px;color:#5d5d5d">Pictures</div>
<div class="abs" style="left:382px;top:511.5px;font-size:14.5px;letter-spacing:0.6px;color:#5d5d5d">Videos</div>
<div class="abs" style="left:382px;top:543.5px;font-size:14.5px;letter-spacing:0.6px;color:#5d5d5d">Trash</div>
<div class="abs" style="left:382px;top:586.5px;font-size:14.5px;letter-spacing:0.6px;color:#5d5d5d">Other Locations</div>
<div class="abs" style="left:535px;width:100px;text-align:center;top:330.5px;font-size:14.5px;letter-spacing:0.65px;color:#3c3c3c">Desktop</div>
<div class="abs" style="left:628px;width:100px;text-align:center;top:330.5px;font-size:14.5px;letter-spacing:0.65px;color:#3c3c3c">Documents</div>
<div class="abs" style="left:721px;width:100px;text-align:center;top:330.5px;font-size:14.5px;letter-spacing:0.65px;color:#3c3c3c">Downloads</div>
<div class="abs" style="left:814px;width:100px;text-align:center;top:330.5px;font-size:14.5px;letter-spacing:0.65px;color:#3c3c3c">Music</div>
<div class="abs" style="left:907px;width:100px;text-align:center;top:330.5px;font-size:14.5px;letter-spacing:0.65px;color:#3c3c3c">Pictures</div>
<div class="abs" style="left:1000px;width:100px;text-align:center;top:330.5px;font-size:14.5px;letter-spacing:0.65px;color:#3c3c3c">Public</div>
<div class="abs" style="left:1093px;width:100px;text-align:center;top:330.5px;font-size:14.5px;letter-spacing:0.65px;color:#3c3c3c">Templates</div>
<div class="abs" style="left:535px;width:100px;text-align:center;top:404.5px;font-size:14.5px;letter-spacing:0.65px;color:#3c3c3c">Videos</div>
<div class="abs" style="left:628px;width:100px;text-align:center;top:404.5px;font-size:14.5px;letter-spacing:0.65px;color:#3c3c3c">Examples</div>
</div>
<div class="layer" id="term">
<div class="frame" style="left:744px;top:413px;width:662px;height:421px;background:#300a24;box-shadow:0 4px 18px rgba(0,0,0,.55)"></div>
<div class="abs" style="left:744px;top:413px;width:662px;height:28px;background:linear-gradient(#3f3e3a,#3c3b37);border-radius:5px 5px 0 0"></div>
<div class="wbtn" style="left:752px;top:420px"></div>
<div class="wbtn" style="left:771px;top:420px"></div>
<div class="wbtn" style="left:790px;top:420px"></div>
<svg class="abs" style="left:744px;top:413px" width="70" height="28" viewBox="744 413 70 28"><path d="M756.5 424.5 L762.5 430.5 M762.5 424.5 L756.5 430.5" stroke="#3c3b37" stroke-width="1"/><path d="M775 427.5 H782" stroke="#3c3b37" stroke-width="1.2"/><rect x="794.5" y="424.5" width="6" height="6" fill="none" stroke="#3c3b37" stroke-width="1.2"/></svg>
<div class="abs" style="left:817px;top:418px;font-size:15px;color:#8d8a83;font-weight:bold;letter-spacing:0.2px">guest-ng5ylz@ubuntu-16-10-yakkety-yak: ~</div>
<div class="abs" style="left:1401px;top:441px;width:5px;height:392px;background:#a09aa0"></div>
<div class="abs" style="left:745px;top:442px;font-family:'Liberation Mono',monospace;font-size:15.05px;font-weight:bold;transform:scaleY(1.17);transform-origin:0 0;line-height:17px"><span style="color:#8ae234">guest-ng5ylz@ubuntu-16-10-yakkety-yak</span><span style="color:#eeeeec">:</span><span style="color:#729fcf">~</span><span style="color:#eeeeec">$ </span></div>
<div class="abs" style="left:1113px;top:441px;width:11px;height:19px;border:1.5px solid #f0f0f0"></div>
</div>

</body></html>
